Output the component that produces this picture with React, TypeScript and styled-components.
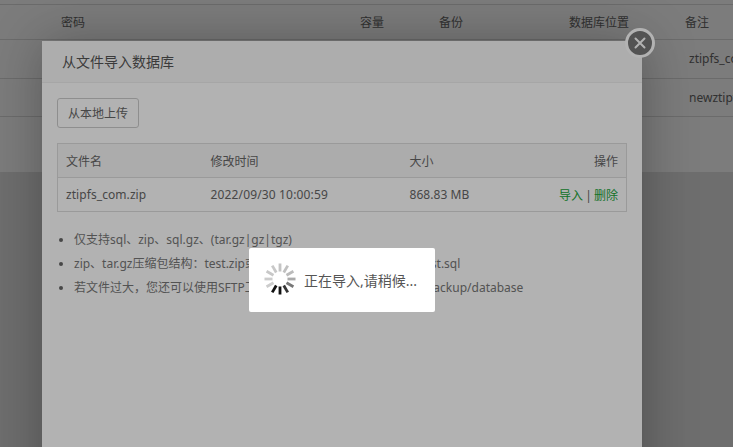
import React from 'react';
import styled, { createGlobalStyle } from 'styled-components';

const GlobalStyle = createGlobalStyle`
  html, body {
    margin: 0;
    height: 100%;
    overflow: hidden;
    background: #e2e2e2;
    font-family: "Noto Sans", "Noto Sans CJK SC", sans-serif;
    font-size: 12px;
    color: #666;
  }
`;

const rows = ['ztipfs_com', 'newztipfs'];

const tips = [
  '仅支持sql、zip、sql.gz、(tar.gz|gz|tgz)',
  'zip、tar.gz压缩包结构：test.zip或test.tar.gz压缩包内，必须包含test.sql',
  '若文件过大，您还可以使用SFTP工具，将数据库文件上传到/www/backup/database',
];

// shade of each blade, clockwise from the top
const bladeShades = ['#c4c4c4', '#c0c0c0', '#bbb', '#aaa', '#777', '#333', '#111', '#111', '#ccc', '#ccc', '#c8c8c8', '#c8c8c8'];

const Spinner = () => (
  <SpinnerSvg viewBox="0 0 32 32">
    {bladeShades.map((shade, i) => (
      <rect
        key={i}
        x="14.6"
        y="0.5"
        width="2.8"
        height="8"
        fill={shade}
        transform={`rotate(${i * 30} 16 16)`}
      />
    ))}
  </SpinnerSvg>
);

const App = () => {
  return (
    <Page>
      <GlobalStyle />
      <BackPanel>
        <BackHead>
          <BackCell $w={299} $pl={61}>密码</BackCell>
          <BackCell $w={79}>容量</BackCell>
          <BackCell $w={130}>备份</BackCell>
          <BackCell $w={116}>数据库位置</BackCell>
          <BackCell>备注</BackCell>
        </BackHead>
        {rows.map((name) => (
          <BackRow key={name}>
            <BackNote>{name}</BackNote>
          </BackRow>
        ))}
      </BackPanel>
      <Shade />
      <Modal>
        <ModalTitle>从文件导入数据库</ModalTitle>
        <ModalBody>
          <UploadButton>从本地上传</UploadButton>
          <FileTable>
            <thead>
              <tr>
                <HeadCell $w={145}>文件名</HeadCell>
                <HeadCell $w={199}>修改时间</HeadCell>
                <HeadCell $w={100}>大小</HeadCell>
                <HeadCell $right>操作</HeadCell>
              </tr>
            </thead>
            <tbody>
              <tr>
                <BodyCell $spacing={0.07}>ztipfs_com.zip</BodyCell>
                <BodyCell $spacing={0.15}>2022/09/30 10:00:59</BodyCell>
                <BodyCell $spacing={0.05}>868.83 MB</BodyCell>
                <ActionCell>
                  <ActionLink>导入</ActionLink> | <ActionLink>删除</ActionLink>
                </ActionCell>
              </tr>
            </tbody>
          </FileTable>
          <TipList>
            {tips.map((tip) => (
              <li key={tip}>{tip}</li>
            ))}
          </TipList>
        </ModalBody>
        <CloseButton>
          <svg width="14" height="14" viewBox="0 0 14 14">
            <path d="M2.5 2.5 L11.5 11.5 M11.5 2.5 L2.5 11.5" stroke="#fff" strokeWidth="2" strokeLinecap="round" />
          </svg>
        </CloseButton>
      </Modal>
      <Shade />
      <LoadingBox>
        <Spinner />
        <LoadingText>正在导入,请稍候...</LoadingText>
      </LoadingBox>
    </Page>
  );
};

export default App;

const Page = styled.div`
  position: relative;
  width: 733px;
  height: 447px;
  overflow: hidden;
`;

const BackPanel = styled.div`
  height: 168px;
  padding-top: 4px;
  background: #fff;
  overflow: hidden;
  font-size: 12px;
`;

const BackHead = styled.div`
  display: flex;
  align-items: center;
  height: 34px;
  border-top: 1px solid #ddd;
  border-bottom: 1px solid #ddd;
  color: #666;
`;

const BackCell = styled.div<{ $w?: number; $pl?: number }>`
  width: ${(p) => (p.$w ? `${p.$w}px` : 'auto')};
  padding-left: ${(p) => p.$pl ?? 0}px;
`;

const BackRow = styled.div`
  display: flex;
  align-items: center;
  height: 37.5px;
  border-bottom: 1px solid #ddd;
`;

const BackNote = styled.div`
  margin-left: 689px;
  white-space: nowrap;
`;

const Shade = styled.div`
  position: absolute;
  inset: 0;
  background: rgba(0, 0, 0, 0.3);
`;

const Modal = styled.div`
  position: absolute;
  left: 42px;
  top: 41px;
  width: 600px;
  height: 600px;
  background: #fff;
  box-shadow: 1px 1px 50px rgba(0, 0, 0, 0.3);
`;

const ModalTitle = styled.div`
  height: 41px;
  line-height: 42px;
  padding-left: 20px;
  font-size: 14px;
  color: #555;
  background: #f8f8f8;
  border-bottom: 1px solid #eee;
`;

const ModalBody = styled.div`
  padding: 15px;
`;

const UploadButton = styled.button`
  display: block;
  width: 82px;
  height: 30px;
  padding: 0;
  background: #fff;
  border: 1px solid #ccc;
  border-radius: 3px;
  font: inherit;
  color: #666;
`;

const FileTable = styled.table`
  width: 570px;
  margin-top: 15px;
  border-collapse: collapse;
  border: 1px solid #ddd;
`;

const HeadCell = styled.th<{ $w?: number; $right?: boolean }>`
  width: ${(p) => (p.$w ? `${p.$w}px` : 'auto')};
  height: 34px;
  padding: 0 8px;
  box-sizing: border-box;
  text-align: ${(p) => (p.$right ? 'right' : 'left')};
  font-weight: 400;
  color: #666;
  background: #f6f6f6;
  border-bottom: 1px solid #ddd;
`;

const BodyCell = styled.td<{ $spacing?: number }>`
  height: 33px;
  padding: 0 8px;
  letter-spacing: ${(p) => p.$spacing ?? 0}px;
  color: #666;
`;

const ActionCell = styled.td`
  height: 33px;
  padding: 0 8px;
  text-align: right;
  word-spacing: -1px;
  color: #666;
`;

const ActionLink = styled.a`
  color: #20a53a;
`;

const TipList = styled.ul`
  margin: 16px 0 0;
  padding-left: 17px;
  line-height: 24px;
  color: #777;
  li::marker {
    color: #666;
  }
`;

const CloseButton = styled.div`
  position: absolute;
  right: -13px;
  top: -13px;
  display: flex;
  align-items: center;
  justify-content: center;
  width: 24px;
  height: 24px;
  border: 3px solid #fff;
  border-radius: 50%;
  background: #777;
`;

const LoadingBox = styled.div`
  position: absolute;
  left: 249px;
  top: 248px;
  display: flex;
  align-items: center;
  width: 186px;
  height: 64px;
  padding-left: 15px;
  box-sizing: border-box;
  background: #fff;
  border-radius: 2px;
`;

const SpinnerSvg = styled.svg`
  width: 32px;
  height: 32px;
  flex: none;
  margin-top: -2px;
`;

const LoadingText = styled.span`
  margin-left: 8px;
  font-size: 14px;
  color: #555;
  white-space: nowrap;
`;
